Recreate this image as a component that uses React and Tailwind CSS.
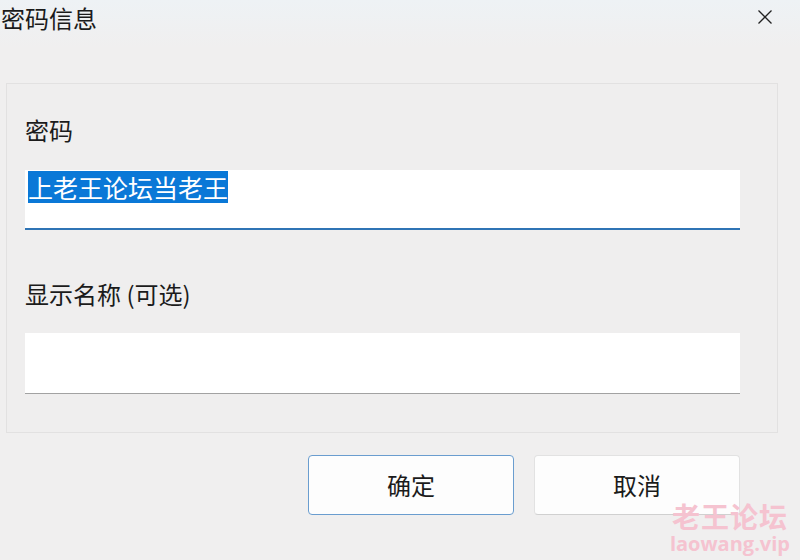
const font = { fontFamily: '"Microsoft YaHei", "Noto Sans CJK SC", "Noto Sans", sans-serif' };

const Field = ({ label, children, className = '' }) => (
  <div className={className}>
    <div className="text-[24px] leading-[32px] text-[#1b1b1b]">{label}</div>
    {children}
  </div>
);

export default function App() {
  return (
    <div className="relative w-[800px] h-[560px] overflow-hidden bg-[#f0efef] text-[#1b1b1b]" style={font}>
      {/* Title bar */}
      <div className="h-[48px] flex items-start justify-between bg-gradient-to-b from-[#eef2f5] to-[#f0efef]">
        <div className="pl-[1px] pt-[2px] text-[24px] leading-[32px]">密码信息</div>
        <button className="mt-[10px] mr-[28px] text-[#222]">
          <svg width="14" height="14" viewBox="0 0 14 14" fill="none" stroke="currentColor" strokeWidth="1.3">
            <path d="M0.5 0.5L13.5 13.5M13.5 0.5L0.5 13.5" />
          </svg>
        </button>
      </div>

      {/* Form panel */}
      <div className="ml-[6px] mt-[35px] w-[772px] h-[350px] border border-[#e2e1e1] bg-[#efeeee] pl-[18px] pr-[37px] pt-[30px]">
        <Field label="密码">
          <div className="mt-[24px] h-[60px] bg-white border-b-2 border-[#2f74b5] pl-[3px] pt-[1px]">
            <span className="bg-[#0a78d7] text-white text-[25px] leading-[32px] inline-block">上老王论坛当老王</span>
          </div>
        </Field>
        <Field label="显示名称 (可选)" className="mt-[48px]">
          <div className="mt-[23px] h-[61px] bg-white border-b border-[#a2a2a2]"></div>
        </Field>
      </div>

      {/* Buttons */}
      <div className="flex justify-end gap-[20px] mt-[22px] pr-[60px]">
        <button className="w-[206px] h-[60px] rounded-[4px] border border-[#6a9dcf] bg-[#fdfdfd] text-[24px] text-[#1b1b1b]">确定</button>
        <button className="w-[206px] h-[60px] rounded-[4px] border border-[#e2e2e2] border-b-[#d0d0d0] bg-[#fdfdfd] text-[24px] text-[#1b1b1b]">取消</button>
      </div>

      {/* Watermark */}
      <div className="absolute right-[10px] bottom-[6px] flex flex-col items-center gap-[4px] pointer-events-none select-none text-[#f5c3d0]">
        <div className="text-[28px] leading-[28px] font-bold tracking-[1px]">老王论坛</div>
        <div className="text-[20px] leading-[20px] font-bold" style={{ fontFamily: '"Open Sans", "Noto Sans", sans-serif' }}>laowang.vip</div>
      </div>
    </div>
  );
}
